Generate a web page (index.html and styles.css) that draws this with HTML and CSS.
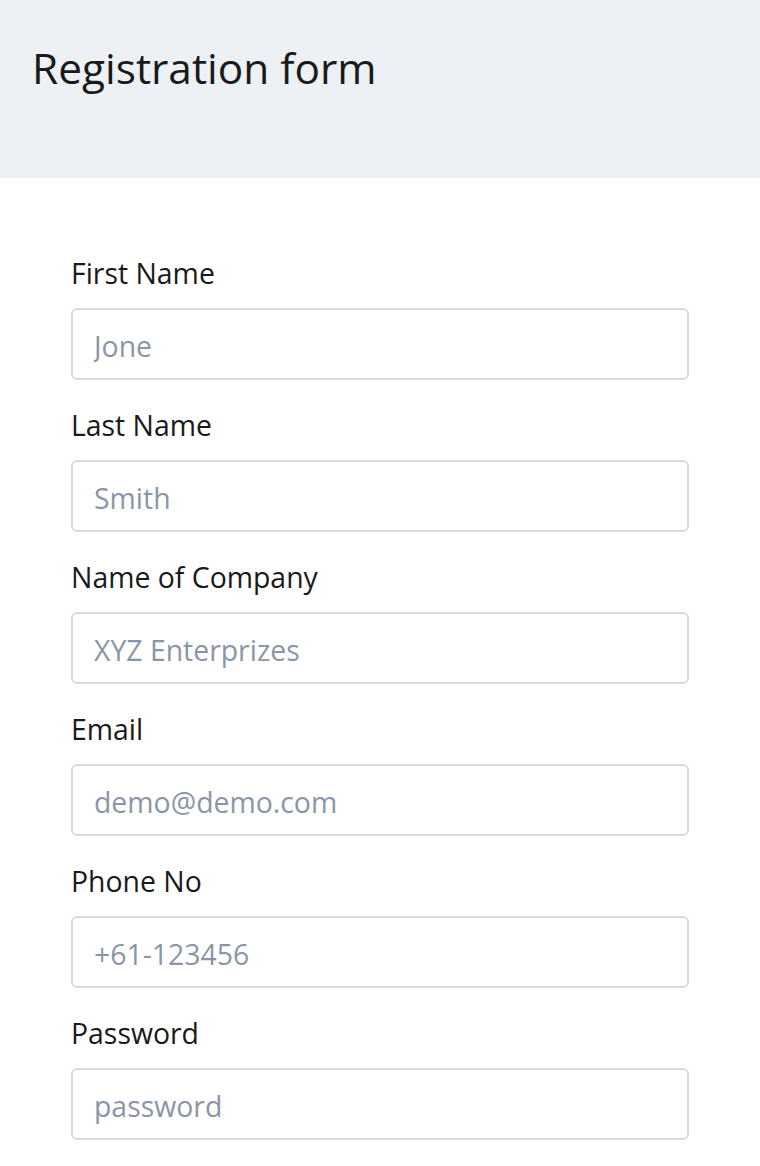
FILE: index.html
```html
<!DOCTYPE html>
<html lang="en">
<head>
<meta charset="utf-8">
<title>Registration form</title>
<link rel="stylesheet" href="styles.css">
</head>
<body>
<header class="page-header">
  <h1 class="page-title">Registration form</h1>
</header>
<form class="reg-form">
  <div class="field">
    <label class="field-label" for="fname">First Name</label>
    <input class="field-input" id="fname" type="text" placeholder="Jone">
  </div>
  <div class="field">
    <label class="field-label" for="lname">Last Name</label>
    <input class="field-input" id="lname" type="text" placeholder="Smith">
  </div>
  <div class="field">
    <label class="field-label" for="company">Name of Company</label>
    <input class="field-input" id="company" type="text" placeholder="XYZ Enterprizes">
  </div>
  <div class="field">
    <label class="field-label" for="email">Email</label>
    <input class="field-input" id="email" type="email" placeholder="demo@demo.com">
  </div>
  <div class="field">
    <label class="field-label" for="phone">Phone No</label>
    <input class="field-input" id="phone" type="tel" placeholder="+61-123456">
  </div>
  <div class="field">
    <label class="field-label" for="pwd">Password</label>
    <input class="field-input" id="pwd" type="password" placeholder="password">
  </div>
</form>
</body>
</html>
```
FILE: styles.css
```css
* { box-sizing: border-box; }
html, body { margin: 0; padding: 0; background: #ffffff; }
body {
  font-family: "Open Sans", "Noto Sans", sans-serif;
  color: #1a1a1a;
}
.page-header {
  height: 178px;
  background: #edf1f5;
  padding: 43px 32px 0;
}
.page-title {
  margin: 0;
  font-size: 42.4px;
  font-weight: 400;
  line-height: 1.2;
  color: #1a1a1a;
}
.reg-form {
  padding: 76px 71px 0;
  display: flex;
  flex-direction: column;
  gap: 26px;
}
.field {
  display: flex;
  flex-direction: column;
  gap: 15px;
}
.field-label {
  font-size: 28.4px;
  line-height: 39px;
  color: #1a1a1a;
}
.field-input {
  width: 100%;
  height: 72px;
  border: 2px solid #d7dce1;
  border-radius: 6px;
  padding: 4px 21px 0;
  font-family: inherit;
  font-size: 28.4px;
  color: #333;
  background: #fff;
  outline: none;
}
.field-input::placeholder {
  color: #8a96a7;
  opacity: 1;
}
```
